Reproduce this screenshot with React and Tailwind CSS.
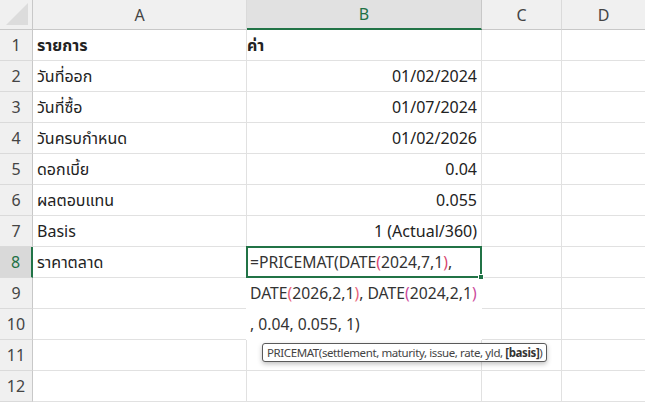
import React from "react";

const rows = [
  ["รายการ", "ค่า", true],
  ["วันที่ออก", "01/02/2024"],
  ["วันที่ซื้อ", "01/07/2024"],
  ["วันครบกำหนด", "01/02/2026"],
  ["ดอกเบี้ย", "0.04"],
  ["ผลตอบแทน", "0.055"],
  ["Basis", "1 (Actual/360)"],
  ["ราคาตลาด", null],
  ["", null],
  ["", null],
  ["", ""],
  ["", ""],
];

const font = { fontFamily: '"Noto Sans", "Noto Sans Thai", "Open Sans", sans-serif' };

function Paren({ c, children }) {
  return <span className={c}>{children}</span>;
}

export default function App() {
  return (
    <div className="w-[645px] h-[405px] overflow-hidden bg-white text-[#222]" style={font}>
      <div className="grid grid-cols-[33px_214px_235px_80px_1fr] grid-rows-[30px_repeat(12,31px)] relative">
        {/* corner */}
        <div className="bg-[#f0f0f0] border-r border-b border-[#c8c8c8] relative">
          <div className="absolute right-[4px] bottom-[4px] w-0 h-0 border-l-[22px] border-l-transparent border-b-[22px] border-b-[#dcdcdc]" />
        </div>
        {/* column headers */}
        <div className="bg-[#f0f0f0] border-r border-[#dadada] border-b border-b-[#c8c8c8] flex items-center justify-center text-[16px] text-[#444]">A</div>
        <div className="bg-[#e1e1e1] border-r border-[#c8c8c8] border-b-2 border-b-[#217346] flex items-center justify-center text-[16px] text-[#1e7145]">B</div>
        <div className="bg-[#f0f0f0] border-r border-[#dadada] border-b border-b-[#c8c8c8] flex items-center justify-center text-[16px] text-[#444]">C</div>
        <div className="bg-[#f0f0f0] border-b border-b-[#c8c8c8] flex items-center justify-center text-[16px] text-[#444]">D</div>

        {rows.map(([a, b, bold], i) => {
          const n = i + 1;
          const sel = n === 8;
          return (
            <React.Fragment key={n}>
              <div
                className={
                  sel
                    ? "bg-[#d9d9d9] border-r-2 border-r-[#217346] border-b border-b-[#dadada] flex items-center justify-center text-[16px] text-[#1e7145]"
                    : "bg-[#f0f0f0] border-r border-r-[#c8c8c8] border-b border-b-[#dadada] flex items-center justify-center text-[16px] text-[#444]"
                }
              >
                {n}
              </div>
              <div className={"border-r border-b border-[#e1e1e1] flex items-center pl-[4px] text-[16px] " + (bold ? "font-bold" : "")}>
                {a}
              </div>
              {n === 8 ? (
                <div className="row-span-3 bg-white relative -ml-px -mt-px z-10">
                  <div className="absolute left-0 top-0 w-[236px] h-[32px] border-2 border-[#217346]">
                    <div className="absolute -right-[4px] -bottom-[4px] w-[6px] h-[6px] bg-[#217346] border border-white" />
                  </div>
                  <div className="pl-[4px] pt-px text-[15.7px] leading-[31px] text-[#333] relative">
                    <div>
                      =PRICEMAT(DATE<Paren c="text-[#d9466f]">(</Paren>2024,7,1<Paren c="text-[#d9466f]">)</Paren>,
                    </div>
                    <div>
                      DATE<Paren c="text-[#e8627a]">(</Paren>2026,2,1<Paren c="text-[#e8627a]">)</Paren>, DATE<Paren c="text-[#cc4a9c]">(</Paren>2024,2,1<Paren c="text-[#cc4a9c]">)</Paren>
                    </div>
                    <div>, 0.04, 0.055, 1)</div>
                  </div>
                </div>
              ) : n === 9 || n === 10 ? null : (
                <div className="border-r border-b border-[#e1e1e1] flex items-center justify-end pr-[4px] text-[16px]">
                  <span className={bold ? "font-bold mr-auto pl-[0px]" : ""}>{b}</span>
                </div>
              )}
              <div className="border-r border-b border-[#e1e1e1]" />
              <div className="border-b border-[#e1e1e1]" />
            </React.Fragment>
          );
        })}

        {/* function tooltip */}
        <div
          className="absolute left-[262px] top-[343px] z-20 h-[19px] px-[4px] flex items-center rounded-[3px] border border-[#5a5a5a] bg-white shadow-[0_2px_5px_rgba(0,0,0,0.25)] text-[11.5px] tracking-[-0.4px] leading-none text-[#444] whitespace-nowrap"
          style={{ fontFamily: '"Noto Sans", sans-serif' }}
        >
          <span>PRICEMAT(settlement, maturity, issue, rate, yld,</span>
          <span className="whitespace-pre"> </span>
          <span className="font-bold text-[#333]">[basis]</span>
          <span>)</span>
        </div>
      </div>
    </div>
  );
}
